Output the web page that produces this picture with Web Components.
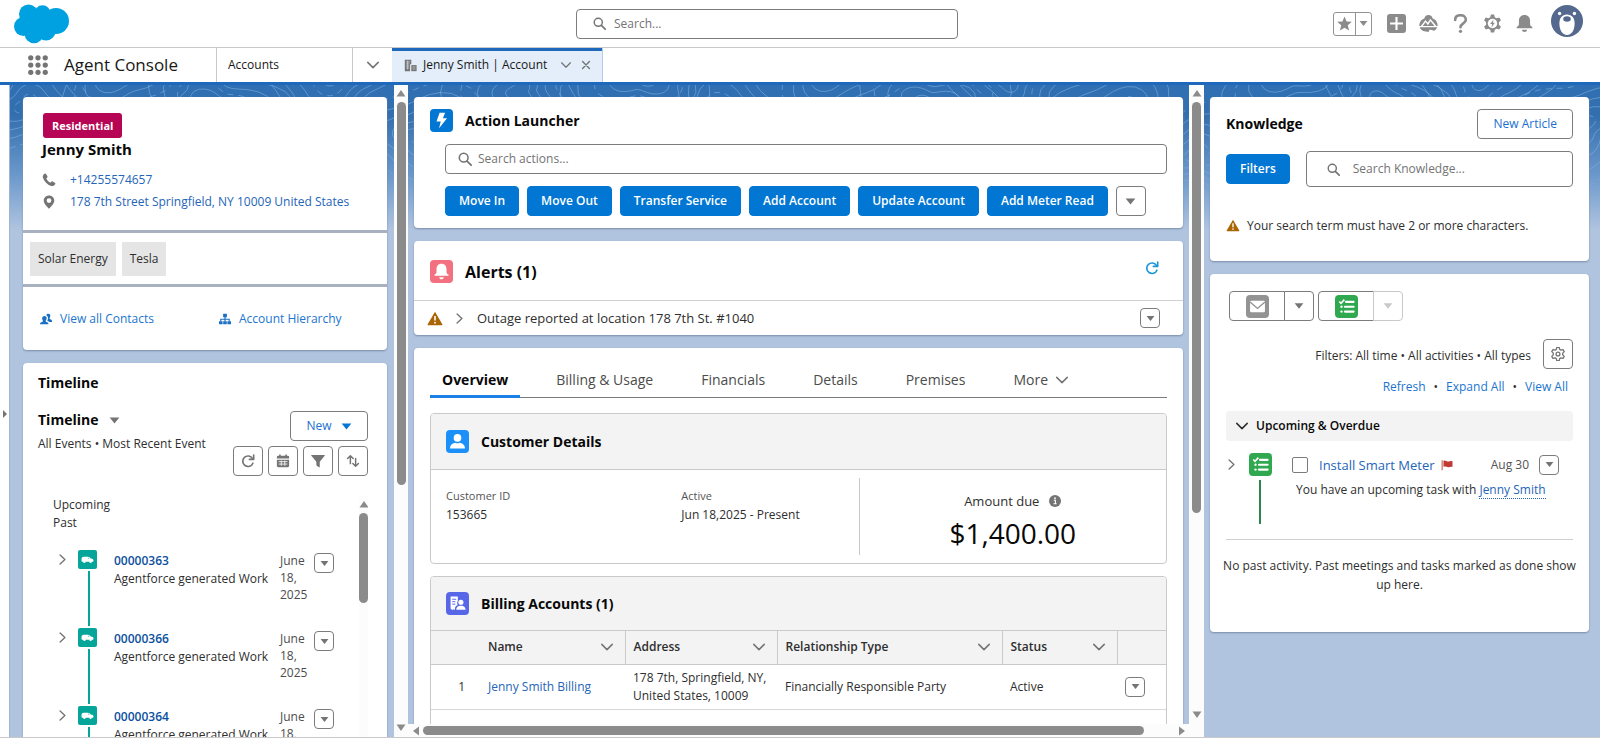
<!DOCTYPE html>
<html lang="en">
<head>
<meta charset="utf-8">
<meta name="viewport" content="width=device-width, initial-scale=1">
<title>Jenny Smith | Account</title>
<style>
  html, body { margin: 0; height: 100%; }
  body { font: 12px/18px "Open Sans", "Noto Sans", sans-serif; color: #2e2e2e; background: #fff; }
</style>
</head>
<body>
<console-app></console-app>
<script>
const BASE = `
  :host { box-sizing: border-box; display: block; }
  *, *::before { box-sizing: border-box; }
  h1, h2, h3, p, ul, dl, dd, dt { margin: 0; padding: 0; font: inherit; }
  ul { list-style: none; }
  a { color: #2565b8; text-decoration: none; }
  h2 { font-size: 14px; line-height: 20px; font-weight: 700; color: #080808; }
  .row { display: flex; align-items: center; }
  .tile { width: 23px; height: 23px; border-radius: 4px; padding: 3px; color: #fff; flex: none; }
  .grow { flex: 1; min-width: 0; }
`;
function define(name, css, html, setup) {
  customElements.define(name, class extends HTMLElement {
    constructor() {
      super();
      this.attachShadow({ mode: "open" });
    }
    connectedCallback() {
      if (this.shadowRoot.firstChild) return;
      const attr = key => this.getAttribute(key) || "";
      const body = typeof html === "function" ? html(attr) : html;
      this.shadowRoot.innerHTML = `<style>${BASE}${css}</style>${body}`;
      if (setup) setup(this);
    }
  });
}

const line = (d, w = 1.6) => `<path d="${d}" fill="none" stroke="currentColor" stroke-width="${w}" stroke-linecap="round" stroke-linejoin="round"/>`;
const GEAR = "M6.600 .5h2.800l.5 2.300 1.500.8 2.300-.7 1.400 2.400-1.700 1.700v2l1.700 1.700-1.400 2.400-2.300-.7-1.500.8-.5 2.300H6.600l-.5-2.300-1.500-.8-2.300.7L.9 10.700 2.600 9V7L.9 5.300l1.400-2.400 2.300.7 1.500-.8z";
const ICONS = {
  search: `<circle cx="6.500" cy="6.500" r="5" fill="none" stroke="currentColor" stroke-width="1.800"/>${line("M10.300 10.300L15 15", 2)}`,
  down: `<path d="M1 3.500h14L8 12.500z" fill="currentColor"/>`,
  chevron: line("M1 4.500L8 11.500 15 4.500", 2),
  right: line("M4.500 1.500L11.500 8 4.500 14.500", 2),
  close: line("M2.500 2.500L13.500 13.500M13.500 2.500L2.500 13.500", 2.200),
  star: `<path d="M8 .5l2.200 5.300 5.600.4-4.300 3.700 1.400 5.600L8 12.500l-4.900 3 1.400-5.600L.2 6.200l5.600-.4z" fill="currentColor"/>`,
  plus: `<rect width="16" height="16" rx="2.500" fill="currentColor"/><path d="M8 2.600v10.800M2.600 8h10.800" stroke="#fff" stroke-width="1.800"/>`,
  trail: `<path d="M8 .8c2 0 3.300 1.400 3.500 3 2.600.7 4.300 3.300 4.200 6.200H.3C.2 7.100 1.900 4.500 4.500 3.800 4.700 2.200 6 .8 8 .8z" fill="currentColor"/><path d="M2 10.500L5.500 6l2 2.400L9.600 5l4.600 5.500" fill="none" stroke="#fff" stroke-width="1.200"/><path d="M.6 11.200h14.800c-.6 1.300-1.400 2.200-2.500 2.800l-3.900-1-1 2.200-4.500-.9C2 13.500 1.100 12.600.6 11.200z" fill="currentColor"/>`,
  help: `${line("M3.500 5c0-2.600 1.900-4 4.500-4s4.500 1.500 4.500 3.900C12.500 8 8 7.800 8 11.200", 2.200)}<circle cx="8" cy="14.600" r="1.400" fill="currentColor"/>`,
  gear: `<path d="${GEAR}" fill="currentColor"/><circle cx="8" cy="8" r="4" fill="#fff"/><path d="M8.900 4.600L6 8.500h1.700l-.6 2.900 2.900-4.100H8.300z" fill="currentColor"/>`,
  cog: `<path d="${GEAR}" fill="none" stroke="currentColor" stroke-width="1.500" stroke-linejoin="round"/><circle cx="8" cy="8" r="2.200" fill="none" stroke="currentColor" stroke-width="1.500"/>`,
  bell: `<path d="M8 .8c3 0 4.700 2.100 4.700 4.900v2.900c0 1.100 1 1.700 1.900 2.300v1H1.400v-1c.9-.6 1.900-1.200 1.900-2.300V5.700C3.300 2.900 5 .8 8 .8zM5.800 13.300h4.400c-.2 1.200-1.100 1.900-2.200 1.900s-2-.7-2.200-1.900z" fill="currentColor"/>`,
  building: `<path d="M1 1h8v5.500H7.500V15H1z" fill="currentColor"/><path d="M9 7.500h6.500V15H9z" fill="currentColor"/><path d="M2.500 3.500h5M2.500 6h4M2.500 8.500h4M2.500 11h4M4.500 2v11M10.500 9.800h3.500M10.500 12.300h3.500" stroke="#e3eefa" stroke-width=".7"/>`,
  phone: `<path d="M3 .9c.8-.5 1.400-.3 1.800.4l1.400 2.500c.3.600.1 1.100-.4 1.600l-.9.800c.8 2 2.700 3.900 4.800 4.800l.8-.9c.5-.5 1-.7 1.600-.4l2.500 1.400c.7.4.9 1 .4 1.800-1 1.700-2.500 2.500-4.500 1.900C5.900 13.300 2.700 10.100 1.100 5.500.5 3.500 1.300 1.900 3 .9z" fill="currentColor"/>`,
  pin: `<path fill-rule="evenodd" d="M8 .5c3.300 0 6 2.500 6 5.800 0 3.600-3.700 6.900-6 9.500C5.700 13.200 2 9.900 2 6.300 2 3 4.700.5 8 .5zm0 3.200a2.700 2.700 0 100 5.400 2.700 2.700 0 000-5.400z" fill="currentColor"/>`,
  people: `<path d="M6 4c1.900 0 2.900 1.300 2.900 3 0 1.200-.5 2.200-1.100 2.900-.5.700-.2 1.300.5 1.600 1.800.8 3 1.300 3 3V15H0v-.5c0-1.700 1.500-2.200 3.200-3 .8-.3 1-.9.500-1.600C3.200 9.200 2.900 8.200 2.900 7c0-1.700 1.200-3 3.100-3z" fill="currentColor"/><path d="M11 1c1.900 0 2.800 1.200 2.800 2.800 0 1.200-.3 1.900-.9 2.600-.5.800-.3 1.200.4 1.600 1.500.8 2.700 1.200 2.700 2.800V12h-3.600c-.7-.8-1.800-1.300-2.800-1.700.7-1 1.100-2.100 1.100-3.400 0-1.900-.9-3.300-2.300-4C8.800 1.700 9.700 1 11 1z" fill="currentColor"/>`,
  hierarchy: `<path d="M5.500 1h5v4.500h-5zM0 11h4.800v4H0zM5.600 11h4.800v4H5.600zM11.200 11H16v4h-4.800z" fill="currentColor"/><path d="M8 5v6M2.400 11V8.300h11.200V11" fill="none" stroke="currentColor" stroke-width="1.500"/>`,
  refresh: `${line("M13.600 10.500a6 6 0 1 1-.4-5.300", 1.900)}${line("M14.500 1.300v4.900H9.600", 1.900)}`,
  calendar: `<path d="M3 2h10.500A1.500 1.500 0 0115 3.500V5H1V3.500A1.500 1.500 0 012.500 2zM1 6.500h14v7a1.500 1.500 0 01-1.500 1.500h-11A1.500 1.500 0 011 13.500z" fill="currentColor"/><path d="M4.500.5v3M11.500.5v3" stroke="currentColor" stroke-width="1.800"/><path d="M3 8.700h10M3 11.500h10M6 7.500v6M10 7.500v6" stroke="#fff" stroke-width=".9"/>`,
  funnel: `<path d="M.8 1h14.400c.6 0 .8.700.4 1.100L10 8.800v5.700c0 .5-.5.800-.9.500l-2.400-1.500c-.4-.3-.6-.6-.6-1.100V8.800L.4 2.100C0 1.700.2 1 .8 1z" fill="currentColor"/>`,
  sort: `${line("M5 11V2.500M1.800 5.200L5 2l3.200 3.200M11 5v8.500M7.800 10.800L11 14l3.200-3.200", 1.700)}`,
  van: `<path d="M.6 8.500C.6 5.500 1.300 4.500 3.500 4.500h5c1.500 0 2.500 1 3.500 2.200 2.100.3 3.400.8 3.400 2.500 0 1.200-.4 1.600-1.400 1.600H2c-1.100 0-1.400-.8-1.400-2.300z" fill="#fff"/><circle cx="4.200" cy="10.900" r="1.500" fill="#fff"/><circle cx="11.800" cy="10.900" r="1.500" fill="#fff"/><path d="M8.600 5.600v1.300h1.900z" fill="#06a59a"/>`,
  bolt: `<path d="M6.200.8h5.200L9.300 5.900h3.900L5.700 15.300l1.600-6.400H3.300z" fill="currentColor"/>`,
  warn: `<path d="M8 .8L15.800 14.200a.7.700 0 01-.6 1H.8a.7.700 0 01-.6-1z" fill="#a96404"/><path d="M8 5.300v4.900" stroke="#fff" stroke-width="1.700"/><circle cx="8" cy="12.400" r="1" fill="#fff"/>`,
  person: `<circle cx="8" cy="4.600" r="3.600" fill="#fff"/><path d="M1 14.500c0-3.500 2.300-4.700 4.800-5.300 1.300.7 3.100.7 4.400 0 2.500.6 4.800 1.800 4.800 5.300z" fill="#fff"/>`,
  billing: `<path d="M1.500 1.500h6.800v4.200C7.300 7 7.700 8.600 8.200 9.500 6.300 10.300 5.600 11 5.500 14l-1-.7-1.200.9-1.800-1.200z" fill="#fff"/><path d="M3 4h3.800M3 6.300h3M3 8.600h3" stroke="#5867e8" stroke-width=".9"/><circle cx="11.200" cy="6.800" r="2.400" fill="#fff"/><path d="M6.800 13.800c0-2.400 1.400-3.200 3.200-3.800h2.400c1.800.6 3.200 1.400 3.200 3.800z" fill="#fff"/>`,
  info: `<circle cx="8" cy="8" r="8" fill="currentColor"/><circle cx="8" cy="4.300" r="1.200" fill="#fff"/><path d="M6.300 7h2.200v4.500M6 11.700h4.200" fill="none" stroke="#fff" stroke-width="1.500"/>`,
  mail: `<rect x="1" y="2.500" width="14" height="11" rx="1.200" fill="#fff"/><path d="M1 3.800l7 6 7-6" fill="none" stroke="#939393" stroke-width="1.300"/>`,
  tasks: `<path d="M1.200 3.300L2.800 5 6 1.500" fill="none" stroke="#fff" stroke-width="1.500"/><path d="M7.500 3.600h7.200M6.500 8.200h8.200M6.500 12.800h8.200" stroke="#fff" stroke-width="2" stroke-linecap="round"/><circle cx="3.300" cy="8.200" r="1.100" fill="#fff"/><circle cx="3.300" cy="12.800" r="1.100" fill="#fff"/>`,
  flag: `<path d="M1.500 1.500v13.500" stroke="#c4544e" stroke-width="1.400"/><path d="M3.300 2.200c3-1.200 4.400 1.700 7 1 1.500-.4 3.200-1 5-.2v7.700c-2.300-.7-3.700.5-5.700.3-2.300-.3-3.700-1.800-6.300-.7z" fill="#c23934"/>`,
  waffle: [2.2, 8, 13.8].map(y => [2.2, 8, 13.8].map(x => `<circle cx="${x}" cy="${y}" r="2.100" fill="currentColor"/>`).join("")).join(""),
};
define("ui-icon", `
  :host { display: inline-block; width: 12px; height: 12px; flex: none; color: #747474; }
  svg { display: block; width: 100%; height: 100%; }
`, attr => `<svg viewBox="0 0 16 16" aria-hidden="true">${ICONS[attr("name")]}</svg>`);

define("ui-button", `
  :host { display: inline-flex; height: 30px; flex: none; }
  button { width: 100%; height: 100%; margin: 0; padding: 0 15px; display: flex; align-items: center;
    justify-content: center; gap: 9px; font: inherit; color: #1b6fd0; background: #fff;
    border: 1px solid #7c7c7c; border-radius: var(--radius, 4px); white-space: nowrap; }
  :host([brand]) button { color: #fff; background: #0176d3; border-color: #0176d3; font-weight: 600; padding: 0 13px; }
  :host([square]) { width: 30px; }
  :host([mini]) { width: 20px; height: 20px; }
  :host([square]) button, :host([mini]) button { padding: 0; }
  :host([disabled]) button { border-color: #c9c9c9; }
`, attr => `<button type="button" ${attr("label") ? `aria-label="${attr("label")}"` : ""}><slot></slot></button>`);

define("mini-menu", `:host { display: inline-flex; flex: none; } ui-icon { width: 9px; height: 9px; }`,
  `<ui-button mini label="Show actions"><ui-icon name="down"></ui-icon></ui-button>`);

define("ui-search", `
  :host { height: 30px; }
  label { display: flex; align-items: center; gap: var(--gap, 6px); height: 100%; padding: 0 8px 0 var(--inset, 12px);
    border: 1px solid #7c7c7c; border-radius: 4px; background: #fff; }
  ui-icon { width: var(--glyph, 14px); height: var(--glyph, 14px); }
  input { flex: 1; min-width: 0; border: 0; padding: 0; outline: 0; background: none; font: inherit; color: #2e2e2e; }
  input::placeholder { color: #747474; opacity: 1; }
`, attr => `<label><ui-icon name="search"></ui-icon><input type="search" aria-label="${attr("hint")}" placeholder="${attr("hint")}"></label>`);

define("ui-card", `
  :host { background: #fff; border-radius: 4px; box-shadow: 0 1px 2px #7b8ba8; flex: none; }
`, `<slot></slot>`);

define("scroll-rail", `
  :host { display: flex; flex-direction: column; align-items: center; background: var(--rail, #fcfcfc); overflow: hidden; }
  :host([across]) { flex-direction: row; }
  svg { width: 10px; height: 15px; margin-bottom: 2px; flex: none; }
  :host([across]) svg { width: 15px; height: 10px; margin: 0; }
  .track { flex: 1; min-height: 0; min-width: 0; }
  .thumb { width: 9px; height: var(--size); border-radius: 5px; background: #8b8b8b; }
  :host([across]) .thumb { height: 9px; width: var(--size); }
`, `<svg viewBox="0 0 10 15"><path class="a" d="M5 5l4.500 6.500H.5z" fill="#8b8b8b"/></svg>
  <div class="track"><div class="thumb"></div></div>
  <svg viewBox="0 0 10 15"><path class="b" d="M5 11L.5 4.500h9z" fill="#8b8b8b"/></svg>`,
  host => {
    if (!host.hasAttribute("across")) return;
    const [a, b] = host.shadowRoot.querySelectorAll("svg");
    a.setAttribute("viewBox", "0 0 15 10");
    b.setAttribute("viewBox", "0 0 15 10");
    a.firstElementChild.setAttribute("d", "M5 5l6-4.500v9z");
    b.firstElementChild.setAttribute("d", "M11 5L5 .5v9z");
  });

define("global-header", `
  :host { display: grid; grid-template-columns: minmax(0, 562fr) 382px minmax(0, 626fr); align-items: center; height: 47px; padding: 0 16px 0 14px; background: #fff; flex: none; }
  .logo { width: 56px; height: 40px; display: block; }
  ui-search { --inset: 16px; --gap: 8px; --glyph: 13px; }
  .tools { justify-content: flex-end; gap: 13px; }
  .tools > ui-icon { width: 19px; height: 19px; color: #8b8b8b; }
  .fav { height: 24px; margin-right: 2px; border: 1px solid #939393; border-radius: 3px; }
  .fav ui-icon:first-child { margin: 0 3px; width: 15px; height: 15px; color: #8b8b8b; }
  .fav ui-icon:last-child { width: 9px; height: 9px; margin: 0 3px; color: #8b8b8b; }
  .fav i { width: 1px; height: 100%; background: #939393; }
  .avatar { width: 32px; height: 32px; margin: 0 1px 6px 4px; }
`, `
  <svg class="logo" viewBox="0 0 56 40" aria-label="Salesforce" role="img"><g fill="#00a1e0">
    <circle cx="14.500" cy="10" r="9.500"/><circle cx="28.500" cy="9.500" r="8.200"/><circle cx="42" cy="17" r="13"/>
    <circle cx="9.500" cy="22.500" r="9.500"/><circle cx="20" cy="30" r="9.300"/><circle cx="32" cy="27" r="9.500"/><path d="M8 12h32v16H8z"/></g></svg>
  <ui-search hint="Search..."></ui-search>
  <div class="row tools">
    <div class="row fav"><ui-icon name="star"></ui-icon><i></i><ui-icon name="down"></ui-icon></div>
    <ui-icon name="plus"></ui-icon><ui-icon name="trail"></ui-icon><ui-icon name="help"></ui-icon>
    <ui-icon name="gear"></ui-icon><ui-icon name="bell"></ui-icon>
    <svg class="avatar" viewBox="0 0 32 32" role="img" aria-label="User"><circle cx="16" cy="16" r="16" fill="#54698d"/>
      <circle cx="8.600" cy="8.500" r="1.700" fill="#fff"/><circle cx="23.400" cy="8.500" r="1.700" fill="#fff"/>
      <path d="M16 9.500c5 0 7.600 3.600 7.600 9 0 6.500-2.900 11.500-7.600 11.500S8.400 25 8.400 18.500c0-5.400 2.600-9 7.600-9z" fill="#fff"/>
      <ellipse cx="16" cy="14" rx="3.800" ry="2.700" fill="#54698d"/></svg>
  </div>`);

define("console-nav", `
  :host { display: flex; height: 38px; border-top: 1px solid #c9c9c9; border-bottom: 3px solid #1f69bd; background: #fff; flex: none; color: #181818; }
  .app { width: 217px; padding-left: 28px; gap: 16px; border-right: 1px solid #c9c9c9; font-size: 17px; }
  .app ui-icon { width: 20px; height: 20px; }
  .object { width: 135px; padding-left: 11px; color: #181818; }
  .more { width: 40px; justify-content: center; border-left: 1px solid #c9c9c9; }
  .tab { width: 211px; padding-left: 12px; box-shadow: inset 0 3px #1f69bd; border-right: 1px solid #b5cde8; background: #e3eefa; }
  .tab a { color: #181818; margin: 0 14px 0 6px; white-space: nowrap; }
  .tab ui-icon { width: 13px; height: 13px; }
  .tab .s { width: 10px; height: 10px; margin-right: 10px; }
`, `
  <div class="row app"><ui-icon name="waffle"></ui-icon><span>Agent Console</span></div>
  <a class="row object" href="#accounts">Accounts</a>
  <div class="row more"><ui-icon name="chevron"></ui-icon></div>
  <div class="row tab"><ui-icon name="building"></ui-icon><a href="#jenny">Jenny Smith | Account</a>
    <ui-icon class="s" name="chevron"></ui-icon><ui-icon class="s" name="close"></ui-icon></div>`);

define("contour-backdrop", `
  :host { position: absolute; inset: 0; z-index: -1; overflow: hidden;
    background: linear-gradient(#2f6fb3 0, #336fae 30px, #6b98cb 90px, #b0c4df 145px); }
  svg { display: block; width: 100%; height: 160px; -webkit-mask-image: linear-gradient(#000 40%, transparent); mask-image: linear-gradient(#000 40%, transparent); }
`, `<svg viewBox="0 0 1600 160" preserveAspectRatio="xMidYMin slice" fill="none" stroke="#8fbbe8" stroke-opacity=".5"></svg>`,
  host => {
    const peaks = [[30, 20], [120, -14], [215, 26], [330, -10], [420, 50], [520, 8], [640, -8], [720, 30], [830, -16],
      [930, 20], [1010, -4], [1120, 34], [1200, 70], [1290, -12], [1380, 18], [1480, -6], [1580, 40]];
    host.shadowRoot.querySelector("svg").innerHTML = peaks.map(([cx, cy], k) =>
      [10, 19, 28, 38, 49].map((r, n) => {
        const points = Array.from({ length: 37 }, (_, i) => {
          const t = i * Math.PI / 18;
          const wobble = r * (1 + .22 * Math.sin(3 * t + k) + .12 * Math.cos(2 * t + k * 2 + n / 3));
          return `${(cx + wobble * 1.3 * Math.cos(t)).toFixed(1)} ${(cy + wobble * Math.sin(t)).toFixed(1)}`;
        });
        return `<path d="M${points.join("L")}" ${(k + n) % 4 === 0 ? 'stroke-dasharray="6 5"' : ""}/>`;
      }).join("")).join("");
  });

define("customer-card", `
  .head { padding: 16px 19px 17px; }
  .badge { display: block; width: fit-content; height: 25px; padding: 0 9px; border-radius: 3px; background: #b60554; color: #fff; font-weight: 700; line-height: 26px; margin: 0 0 1px 1px; font-size: 11px; }
  h2 { margin-bottom: 10px; font-size: 15px; }
  .contact { gap: 14px; height: 22px; }
  .contact ui-icon { width: 14px; height: 14px; }
  .chips { gap: 6px; padding: 9px 7px 8px; border: solid #a7b1bf; border-width: 3px 0; }
  .chips li { padding: 0 8px; line-height: 34px; background: #e5e5e5; }
  .links { display: grid; grid-template-columns: 179fr 151fr; height: 63px; padding: 0 17px; align-items: center; }
  .links a { display: flex; align-items: center; gap: 8px; color: #1b75d0; white-space: nowrap; }
  .links ui-icon { color: #1b6fc4; }
`, `
  <ui-card>
    <div class="head"><span class="badge">Residential</span><h2>Jenny Smith</h2>
      <div class="row contact"><ui-icon name="phone"></ui-icon><a href="tel:+14255574657">+14255574657</a></div>
      <div class="row contact"><ui-icon name="pin"></ui-icon><a href="#map">178 7th Street Springfield, NY 10009 United States</a></div></div>
    <ul class="row chips"><li>Solar Energy</li><li>Tesla</li></ul>
    <div class="links"><a href="#contacts"><ui-icon name="people"></ui-icon>View all Contacts</a>
      <a href="#hierarchy"><ui-icon name="hierarchy"></ui-icon>Account Hierarchy</a></div>
  </ui-card>`);

define("timeline-entry", `
  :host { display: grid; grid-template-columns: 21px 36px 1fr 34px 20px; height: 78px; padding-left: 6px; position: relative; }
  .go { width: 11px; height: 11px; margin-top: 4px; }
  .mark { display: flex; flex-direction: column; align-items: flex-start; gap: 2px; }
  .mark ui-icon { width: 19px; height: 19px; border-radius: 2px; background: #06a59a; padding: 3px; }
  .mark i { width: 2px; height: 55px; margin-left: 10px; background: #06a59a; }
  a { font-weight: 600; color: #0b4f9e; }
  .text, time { padding-top: 2px; }
  p { white-space: nowrap; }
  time { line-height: 17px; color: #4c4c4c; width: 28px; }
  mini-menu { margin-top: 3px; }
`, attr => `
  <ui-icon class="go" name="right"></ui-icon>
  <div class="mark"><ui-icon name="van"></ui-icon><i></i></div>
  <div class="text"><a href="#work">${attr("number")}</a><p>Agentforce generated Work</p></div>
  <time datetime="2025-06-18">June 18, 2025</time><mini-menu></mini-menu>`);

define("timeline-card", `
  ui-card { padding: 10px 19px 0 15px; }
  .top { margin-top: 17px; display: flex; justify-content: space-between; }
  .title { gap: 11px; margin-bottom: 5px; }
  .title ui-icon { width: 11px; height: 11px; }
  .tools { display: grid; grid-template-columns: repeat(4, 30px); gap: 5px; margin-top: 1px; }
  .tools ui-icon { width: 14px; height: 14px; }
  .new { grid-column: 1 / -1; justify-self: end; width: 78px; }
  .tools .new ui-icon { width: 11px; height: 11px; color: #0176d3; }
  .filter { white-space: nowrap; width: 166px; }
  .scroller { display: flex; height: 400px; margin-top: 20px; overflow: hidden; }
  .list { padding-right: 25px; }
  .list p { margin-left: 15px; }
  .list p + p { margin-bottom: 18px; }
  .list timeline-entry { margin-left: 13px; }
  scroll-rail { width: 9px; --size: 90px; }
`, `
  <ui-card>
    <h2>Timeline</h2>
    <div class="top">
      <div><div class="row title"><h2>Timeline</h2><ui-icon name="down"></ui-icon></div><p class="filter">All Events • Most Recent Event</p></div>
      <div class="tools"><ui-button class="new">New <ui-icon name="down"></ui-icon></ui-button>
        <ui-button square label="Refresh"><ui-icon name="refresh"></ui-icon></ui-button>
        <ui-button square label="Calendar"><ui-icon name="calendar"></ui-icon></ui-button>
        <ui-button square label="Filter"><ui-icon name="funnel"></ui-icon></ui-button>
        <ui-button square label="Sort"><ui-icon name="sort"></ui-icon></ui-button></div>
    </div>
    <div class="scroller"><div class="grow list"><p>Upcoming</p><p>Past</p>
      <timeline-entry number="00000363"></timeline-entry><timeline-entry number="00000366"></timeline-entry>
      <timeline-entry number="00000364"></timeline-entry></div><scroll-rail></scroll-rail></div>
  </ui-card>`);

define("action-launcher", `
  ui-card { padding: 12px 16px; }
  .head { gap: 12px; margin-bottom: 12px; }
  .tile { background: #0176d3; }
  .body { padding-left: 15px; }
  .buttons { gap: 8px; margin-top: 12px; }
  .buttons ui-icon { width: 11px; height: 11px; }
`, `
  <ui-card>
    <div class="row head"><ui-icon class="tile" name="bolt"></ui-icon><h2>Action Launcher</h2></div>
    <div class="body"><ui-search hint="Search actions..."></ui-search>
      <div class="row buttons"><ui-button brand>Move In</ui-button><ui-button brand>Move Out</ui-button><ui-button brand>Transfer Service</ui-button>
        <ui-button brand>Add Account</ui-button><ui-button brand>Update Account</ui-button><ui-button brand>Add Meter Read</ui-button>
        <ui-button square label="More actions"><ui-icon name="down"></ui-icon></ui-button></div></div>
  </ui-card>`);

define("alerts-card", `
  .head { gap: 12px; height: 60px; padding: 2px 24px 0 16px; border-bottom: 1px solid #d0d0d0; }
  h2 { font-size: 16px; }
  .tile { background: #f2707f; }
  .head > ui-icon:last-child { width: 14px; height: 14px; color: #1b96d8; margin-bottom: 8px; }
  .item { height: 34px; padding: 0 23px 0 13px; font-size: 13px; }
  .item .w { width: 16px; height: 15px; }
  .item .g { width: 11px; height: 11px; margin: 0 12px 0 11px; }
`, `
  <ui-card>
    <div class="row head"><ui-icon class="tile" name="bell"></ui-icon><h2 class="grow">Alerts (1)</h2><ui-icon name="refresh"></ui-icon></div>
    <div class="row item"><ui-icon class="w" name="warn"></ui-icon><ui-icon class="g" name="right"></ui-icon>
      <span class="grow">Outage reported at location 178 7th St. #1040</span><mini-menu></mini-menu></div>
  </ui-card>`);

define("detail-panel", `
  :host { border: 1px solid #c9c9c9; border-radius: 4px; overflow: hidden; }
  header { display: flex; align-items: center; gap: 12px; height: var(--head, 56px); padding: 0 15px; background: #f3f3f3; border-bottom: 1px solid #c9c9c9; }
`, attr => `
  <header><ui-icon class="tile" name="${attr("icon")}" style="background:${attr("tone")}"></ui-icon><h2>${attr("title-text")}</h2></header>
  <slot></slot>`);

define("customer-details", `
  .body { display: grid; grid-template-columns: 235fr 177fr 307fr; height: 93px; padding: 8px 0 8px 15px; }
  .field { padding-top: 9px; }
  .field dt { font-size: 11px; color: #545454; line-height: 18px; }
  dd { line-height: 20px; }
  .due { display: flex; flex-direction: column; align-items: center; border-left: 1px solid #c9c9c9; padding-top: 13px; }
  .due dt { gap: 10px; line-height: 20px; font-size: 13px; }
  .due strong { font-size: 28px; line-height: 44px; font-weight: 400; color: #080808; }
`, `
  <detail-panel icon="person" tone="#1b90f8" title-text="Customer Details">
    <dl class="body"><div class="field"><dt>Customer ID</dt><dd>153665</dd></div>
      <div class="field"><dt>Active</dt><dd>Jun 18,2025 - Present</dd></div>
      <div class="due"><dt class="row">Amount due <ui-icon name="info"></ui-icon></dt><dd><strong>$1,400.00</strong></dd></div></dl>
  </detail-panel>`);

define("billing-accounts", `
  detail-panel { --head: 54px; }
  table { width: 100%; border-collapse: collapse; table-layout: fixed; }
  th, td { text-align: left; padding: 0 0 0 8px; }
  thead tr { height: 33px; background: #f3f3f3; border-bottom: 1px solid #c9c9c9; }
  th { font-weight: 600; color: #2e2e2e; border-right: 1px solid #c9c9c9; }
  th:first-child, th:last-child { border-right: 0; }
  th .row { justify-content: space-between; padding-right: 12px; }
  tbody tr { height: 45px; border-bottom: 1px solid #d8d8d8; }
  td:first-child { text-align: right; padding-right: 15px; }
  .n { width: 49px; }
  .name { width: 145px; }
  .address { width: 152px; }
  .status { width: 115px; }
  mini-menu { vertical-align: middle; }
  .rest { height: 120px; }
`, () => {
    const head = t => `<th scope="col"><div class="row">${t}<ui-icon name="chevron"></ui-icon></div></th>`;
    return `<detail-panel icon="billing" tone="#5867e8" title-text="Billing Accounts (1)">
    <table><colgroup><col class="n"><col class="name"><col class="address"><col><col class="status"><col class="n"></colgroup>
      <thead><tr><th></th>${["Name", "Address", "Relationship Type", "Status"].map(head).join("")}<th></th></tr></thead>
      <tbody><tr><td>1</td><td><a href="#billing">Jenny Smith Billing</a></td><td>178 7th, Springfield, NY, United States, 10009</td>
        <td>Financially Responsible Party</td><td>Active</td><td><mini-menu></mini-menu></td></tr></tbody></table>
    <div class="rest"></div></detail-panel>`;
  });

define("account-overview", `
  ui-card { padding: 13px 16px; }
  nav { display: flex; gap: 24px; height: 37px; border-bottom: 1px solid #7c7c7c; font-size: 14px; margin-bottom: 15px; }
  nav a { display: flex; align-items: center; gap: 8px; height: 37px; padding: 0 12px; color: #4c4c4c; white-space: nowrap; }
  nav a:first-child { color: #080808; font-weight: 700; border-bottom: 3px solid #1b7fe8; padding-top: 3px; }
  customer-details { margin-bottom: 12px; }
`, `
  <ui-card>
    <nav><a href="#overview">Overview</a><a href="#usage">Billing &amp; Usage</a><a href="#financials">Financials</a><a href="#details">Details</a>
      <a href="#premises">Premises</a><a href="#more">More <ui-icon name="chevron"></ui-icon></a></nav>
    <customer-details></customer-details><billing-accounts></billing-accounts>
  </ui-card>`);

define("knowledge-card", `
  ui-card { padding: 12px 16px 26px; }
  .head { justify-content: space-between; }
  .find { gap: 16px; margin: 12px 0 29px; }
  ui-search { height: 36px; --inset: 20px; --gap: 13px; --glyph: 13px; }
  .note { gap: 7px; height: 19px; }
  .note ui-icon { width: 14px; height: 13px; }
`, `
  <ui-card>
    <div class="row head"><h2>Knowledge</h2><ui-button>New Article</ui-button></div>
    <div class="row find"><ui-button brand>Filters</ui-button><ui-search class="grow" hint="Search Knowledge..."></ui-search></div>
    <div class="row note"><ui-icon name="warn"></ui-icon>Your search term must have 2 or more characters.</div>
  </ui-card>`);

define("activity-card", `
  ui-card { padding: 17px 16px 38px; }
  .create { padding-left: 3px; }
  .create .main { width: 56px; --radius: 4px 0 0 4px; }
  .create .drop { width: 30px; margin-left: -1px; margin-right: 4px; --radius: 0 4px 4px 0; }
  .create .drop ui-icon { width: 10px; height: 10px; }
  .drop[disabled] ui-icon { color: #c9c9c9; }
  .filters { justify-content: flex-end; gap: 12px; margin-top: 18px; }
  .filters span { padding-top: 4px; }
  .filters ui-icon { width: 14px; height: 14px; }
  .actions { justify-content: flex-end; gap: 8px; margin: 9px 5px 15px 0; }
  .actions a { color: #1b75d0; }
  .bar { height: 30px; gap: 8px; padding-left: 10px; border-radius: 4px; background: #f3f3f3; color: #080808; font-weight: 600; }
  .bar ui-icon { color: #2e2e2e; }
  .task { display: grid; grid-template-columns: 23px 43px 1fr; margin-top: 12px; }
  .task > ui-icon { width: 11px; height: 11px; margin-top: 6px; }
  .mark { display: flex; flex-direction: column; gap: 4px; }
  .mark i { width: 2px; height: 44px; margin-left: 10px; background: #2e844a; }
  .top { height: 23px; padding-right: 14px; }
  input { width: 16px; height: 16px; margin: 0 11px 0 0; appearance: none; border: 1px solid #7c7c7c; border-radius: 2px; background: #fff; }
  .top a { font-size: 13px; margin-right: 6px; white-space: nowrap; }
  .top time { margin: 0 10px 0 auto; color: #545454; }
  .sub { margin-top: 1px; padding-left: 4px; white-space: nowrap; }
  .sub a { display: inline-block; border-bottom: 1px dotted #2565b8; line-height: 17px; margin-top: 4px; }
  hr { margin: 15px 0 16px; border: 0; border-top: 1px solid #d0d0d0; }
  .none { text-align: center; line-height: 19px; margin: 0 -8px; }
`, `
  <ui-card>
    <div class="row create">
      <ui-button class="main" square label="Email"><ui-icon class="tile" name="mail" style="background:#939393"></ui-icon></ui-button>
      <ui-button class="drop" square label="Email options"><ui-icon name="down"></ui-icon></ui-button>
      <ui-button class="main" square label="New task"><ui-icon class="tile" name="tasks" style="background:#2fa84f"></ui-icon></ui-button>
      <ui-button class="drop" square disabled label="Task options"><ui-icon name="down"></ui-icon></ui-button></div>
    <div class="row filters"><span>Filters: All time • All activities • All types</span>
      <ui-button square label="Settings"><ui-icon name="cog"></ui-icon></ui-button></div>
    <div class="row actions"><a href="#refresh">Refresh</a><span>•</span><a href="#expand">Expand All</a><span>•</span><a href="#all">View All</a></div>
    <div class="row bar"><ui-icon name="chevron"></ui-icon>Upcoming &amp; Overdue</div>
    <div class="task">
      <ui-icon name="right"></ui-icon>
      <div class="mark"><ui-icon class="tile" name="tasks" style="background:#2fa84f"></ui-icon><i></i></div>
      <div><div class="row top"><input type="checkbox" aria-label="Complete Install Smart Meter"><a href="#task">Install Smart Meter</a>
        <ui-icon name="flag"></ui-icon><time>Aug 30</time><mini-menu></mini-menu></div>
        <p class="sub">You have an upcoming task with <a href="#jenny">Jenny Smith</a></p></div>
    </div>
    <hr>
    <p class="none">No past activity. Past meetings and tasks marked as done show up here.</p>
  </ui-card>`);

define("console-app", `
  :host { display: flex; flex-direction: column; height: 100vh; overflow: hidden; }
  main { position: relative; z-index: 0; flex: 1; min-height: 0; display: grid; border-bottom: 1px solid #c9c9c9;
    grid-template-columns: 10px minmax(0, 384fr) 14px minmax(0, 781fr) 15px minmax(0, 396fr);
    grid-template-rows: minmax(0, 1fr) 13px; }
  .gutter, .left, .right, .r1 { grid-row: 1 / 3; }
  .gutter { background: #fff; border-right: 1px solid #9fb4d0; display: flex; align-items: center; padding-top: 6px; }
  .gutter svg { width: 4px; height: 8px; margin-left: 3px; }
  section { display: flex; flex-direction: column; gap: 13px; overflow: hidden; min-height: 0; padding: 12px 6px 0; }
  .left { padding: 12px 7px 0 13px; }
  .right { padding: 12px 11px 0 6px; }
  .r1 { --size: 62%; }
  .r2 { --size: 68%; }
  .across { grid-column: 4; grid-row: 2; --size: 96%; }
  .corner { grid-column: 5; grid-row: 2; background: #fcfcfc; }
`, `
  <global-header></global-header><console-nav></console-nav>
  <main>
    <contour-backdrop></contour-backdrop>
    <div class="gutter"><svg viewBox="0 0 4 8"><path d="M0 0l4 4-4 4z" fill="#747474"/></svg></div>
    <section class="left"><customer-card></customer-card><timeline-card></timeline-card></section>
    <scroll-rail class="r1"></scroll-rail>
    <section class="mid"><action-launcher></action-launcher><alerts-card></alerts-card><account-overview></account-overview></section>
    <scroll-rail class="r2"></scroll-rail>
    <section class="right"><knowledge-card></knowledge-card><activity-card></activity-card></section>
    <scroll-rail class="across" across></scroll-rail><div class="corner"></div>
  </main>`);
</script>
</body>
</html>
